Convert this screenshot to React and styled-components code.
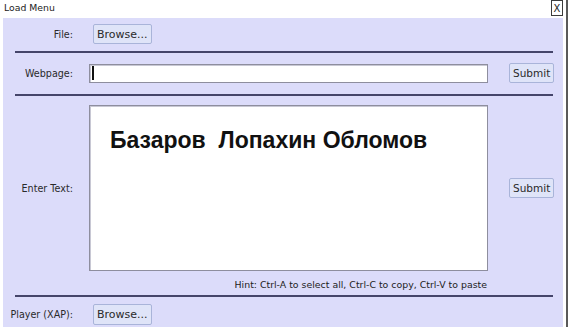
import React from "react";
import styled, { createGlobalStyle } from "styled-components";

const Global = createGlobalStyle`
  html, body { margin: 0; padding: 0; background: #ffffff; }
  body { font-family: "DejaVu Sans", Verdana, sans-serif; }
  * { box-sizing: border-box; }
`;

const Page = styled.div`
  width: 570px;
  height: 327px;
  overflow: hidden;
  background: #ffffff;
`;

const Window = styled.div`
  width: 568px;
  height: 327px;
  border-right: 2px solid #5a5a5a;
  display: flex;
  flex-direction: column;
`;

const TitleBar = styled.div`
  height: 18px;
  display: flex;
  align-items: flex-start;
  justify-content: space-between;
  padding-left: 4px;
  padding-right: 3px;
`;

const Title = styled.span`
  font-size: 9.3px;
  line-height: 16px;
  color: #222;
`;

const CloseBox = styled.button`
  width: 12px;
  height: 16px;
  padding: 0;
  margin: 0;
  border: 1px solid #3c3c3c;
  background: #ffffff;
  font-family: "DejaVu Sans", sans-serif;
  font-size: 10px;
  line-height: 13px;
  color: #222;
  display: flex;
  align-items: center;
  justify-content: center;
`;

const Panel = styled.div`
  flex: 1;
  margin-left: 3px;
  width: 560px;
  background: #dcdcfa;
  display: flex;
  flex-direction: column;
`;

const Row = styled.div`
  display: grid;
  grid-template-columns: 86px 399px 67px;
  align-items: center;
  margin-top: ${(p) => p.$top || 0}px;
`;

const Label = styled.div`
  text-align: right;
  padding-right: 16px;
  font-size: 9.6px;
  color: #2a2a2a;
  white-space: nowrap;
`;

const Cell = styled.div`
  display: flex;
  align-items: center;
`;

const ActionCell = styled(Cell)`
  padding-left: 21px;
`;

const Button = styled.button`
  height: ${(p) => p.$h || 20}px;
  margin-left: ${(p) => p.$indent || 0}px;
  padding: 0 3px;
  border: 1px solid #a9b4d9;
  border-radius: 2px;
  background: #dfe4f8;
  font-family: "DejaVu Sans", Verdana, sans-serif;
  font-size: ${(p) => p.$fs || 11}px;
  color: #2a2a2a;
  white-space: nowrap;
`;

const Field = styled.div`
  width: 399px;
  height: 19px;
  background: #ffffff;
  border: 1px solid #8e8e9e;
  box-shadow: inset 1px 1px 0 #c8c8d4;
  display: flex;
  align-items: center;
  padding-left: 2px;
`;

const Caret = styled.span`
  width: 1.5px;
  height: 14px;
  background: #111;
`;

const TextBox = styled.div`
  width: 399px;
  height: 166px;
  background: #ffffff;
  border: 1px solid #8e8e9e;
  box-shadow: inset 1px 1px 0 #c8c8d4;
  padding: 21px 0 0 20px;
  font-family: "Liberation Sans", Arial, sans-serif;
  font-weight: bold;
  font-size: 23px;
  line-height: 26px;
  color: #111;
  white-space: pre;
`;

const Hint = styled.div`
  grid-column: 2;
  text-align: right;
  padding-right: 1px;
  font-size: 9.4px;
  line-height: 12px;
  color: #222;
  white-space: nowrap;
`;

const Rule = styled.div`
  margin-left: 12px;
  width: 538px;
  height: 2px;
  background: #45456a;
  margin-top: ${(p) => p.$top}px;
`;

export default function App() {
  return (
    <Page>
      <Global />
      <Window>
        <TitleBar>
          <Title>Load Menu</Title>
          <CloseBox>X</CloseBox>
        </TitleBar>
        <Panel>
          <Row $top={6}>
            <Label>File:</Label>
            <Cell>
              <Button $indent={4}>Browse...</Button>
            </Cell>
          </Row>
          <Rule $top={7} />
          <Row $top={10}>
            <Label>Webpage:</Label>
            <Cell>
              <Field>
                <Caret />
              </Field>
            </Cell>
            <ActionCell>
              <Button $fs={10.5}>Submit</Button>
            </ActionCell>
          </Row>
          <Rule $top={11} />
          <Row $top={9}>
            <Label>Enter Text:</Label>
            <Cell>
              <TextBox>{"Базаров  Лопахин Обломов"}</TextBox>
            </Cell>
            <ActionCell>
              <Button $fs={10.5}>Submit</Button>
            </ActionCell>
          </Row>
          <Row $top={8}>
            <Hint>Hint: Ctrl-A to select all, Ctrl-C to copy, Ctrl-V to paste</Hint>
          </Row>
          <Rule $top={4} />
          <Row $top={7}>
            <Label>Player (XAP):</Label>
            <Cell>
              <Button $indent={4} $h={21}>Browse...</Button>
            </Cell>
          </Row>
        </Panel>
      </Window>
    </Page>
  );
}
